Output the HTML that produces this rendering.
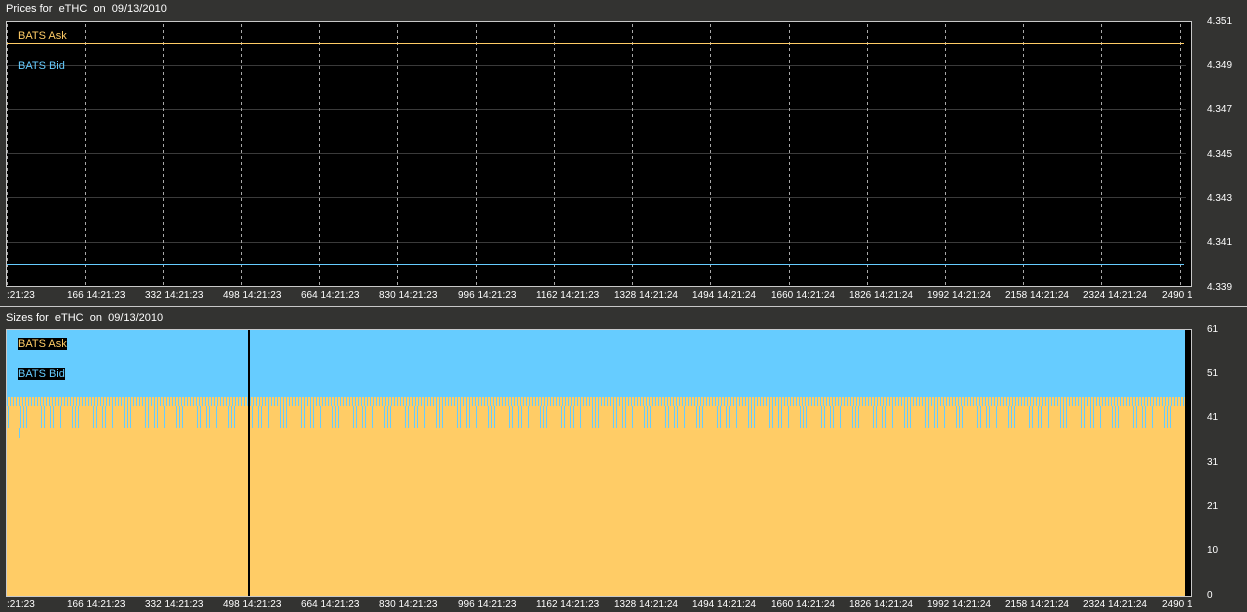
<!DOCTYPE html>
<html><head><style>
body{margin:0;width:1247px;height:612px;background:#333331;overflow:hidden;position:relative;font-family:"Liberation Sans",sans-serif;font-size:10px;color:#fff}
.t{position:absolute;white-space:nowrap;line-height:12px}
svg{position:absolute;left:0;top:0}
</style></head><body>
<svg width="1247" height="612">
<defs>
<pattern id="dash" width="1" height="6" patternUnits="userSpaceOnUse"><rect width="1" height="3" fill="#a8a8a8"/></pattern>
<pattern id="st" x="7" width="3" height="10" patternUnits="userSpaceOnUse"><rect width="1" height="10" fill="#66ccff"/></pattern>
<pattern id="lg" x="7" width="52" height="30" patternUnits="userSpaceOnUse">
<rect x="1" width="1" height="30" fill="#66ccff"/><rect x="13" width="1" height="30" fill="#66ccff"/><rect x="16" width="1" height="30" fill="#66ccff"/><rect x="19" width="1" height="30" fill="#66ccff"/><rect x="34" width="1" height="30" fill="#66ccff"/><rect x="37" width="1" height="30" fill="#66ccff"/><rect x="43" width="1" height="30" fill="#66ccff"/><rect x="46" width="1" height="30" fill="#66ccff"/></pattern>
</defs>
<rect x="6" y="21" width="1186" height="265" fill="#000"/>
<g stroke="#3a3a3a" stroke-width="1">
<line x1="7" y1="65.5" x2="1186" y2="65.5"/><line x1="7" y1="109.5" x2="1186" y2="109.5"/><line x1="7" y1="153.5" x2="1186" y2="153.5"/><line x1="7" y1="197.5" x2="1186" y2="197.5"/><line x1="7" y1="242.5" x2="1186" y2="242.5"/>
</g>
<g fill="url(#dash)">
<rect x="7" y="22" width="1" height="264"/><rect x="85" y="22" width="1" height="264"/><rect x="163" y="22" width="1" height="264"/><rect x="241" y="22" width="1" height="264"/><rect x="319" y="22" width="1" height="264"/><rect x="397" y="22" width="1" height="264"/><rect x="476" y="22" width="1" height="264"/><rect x="554" y="22" width="1" height="264"/><rect x="632" y="22" width="1" height="264"/><rect x="710" y="22" width="1" height="264"/><rect x="789" y="22" width="1" height="264"/><rect x="867" y="22" width="1" height="264"/><rect x="945" y="22" width="1" height="264"/><rect x="1023" y="22" width="1" height="264"/><rect x="1101" y="22" width="1" height="264"/><rect x="1180" y="22" width="1" height="264"/>
</g>
<line x1="7" y1="43.5" x2="1184" y2="43.5" stroke="#ffcc66"/>
<line x1="7" y1="264.5" x2="1184" y2="264.5" stroke="#66ccff"/>
<rect x="6.5" y="21.5" width="1185" height="265" fill="none" stroke="#c8c8c8"/>
<line x1="0" y1="306.5" x2="1247" y2="306.5" stroke="#c8c8c8"/>
<rect x="6" y="329" width="1186" height="267" fill="#66ccff"/>
<rect x="7" y="397" width="1178" height="199" fill="#ffcc66"/>
<rect x="7" y="397" width="1178" height="9" fill="url(#st)"/>
<rect x="7" y="406" width="1178" height="22" fill="url(#lg)"/>
<rect x="19" y="428" width="1" height="10" fill="#66ccff"/>
<rect x="248" y="329" width="2" height="267" fill="#000"/>
<rect x="1185" y="329" width="6" height="267" fill="#000"/>
<rect x="6.5" y="329.5" width="1185" height="267" fill="none" stroke="#c8c8c8"/>
</svg>
<div class="t" style="left:6px;top:3px;font-size:11px">Prices for &nbsp;eTHC &nbsp;on &nbsp;09/13/2010</div>
<div class="t" style="left:6px;top:312px;font-size:11px">Sizes for &nbsp;eTHC &nbsp;on &nbsp;09/13/2010</div>
<div class="t" style="left:18px;top:30px;color:#ffcc66;font-size:11px">BATS Ask</div>
<div class="t" style="left:18px;top:60px;color:#66ccff;font-size:11px">BATS Bid</div>
<div class="t" style="left:18px;top:338px;color:#ffcc66;background:#000;font-size:11px">BATS Ask</div>
<div class="t" style="left:18px;top:368px;color:#66ccff;background:#000;font-size:11px">BATS Bid</div>
<div class="t" style="left:1207px;top:16px">4.351</div>
<div class="t" style="left:1207px;top:60px">4.349</div>
<div class="t" style="left:1207px;top:104px">4.347</div>
<div class="t" style="left:1207px;top:149px">4.345</div>
<div class="t" style="left:1207px;top:193px">4.343</div>
<div class="t" style="left:1207px;top:237px">4.341</div>
<div class="t" style="left:1207px;top:282px">4.339</div>
<div class="t" style="left:1207px;top:324px">61</div>
<div class="t" style="left:1207px;top:368px">51</div>
<div class="t" style="left:1207px;top:412px">41</div>
<div class="t" style="left:1207px;top:457px">31</div>
<div class="t" style="left:1207px;top:501px">21</div>
<div class="t" style="left:1207px;top:545px">10</div>
<div class="t" style="left:1207px;top:590px">0</div>
<div style="position:absolute;left:0;top:290px;width:1192px;height:14px;overflow:hidden">
<div class="t" style="left:7px;top:0">:21:23</div>
<div class="t" style="left:67px;top:0">166 14:21:23</div>
<div class="t" style="left:145px;top:0">332 14:21:23</div>
<div class="t" style="left:223px;top:0">498 14:21:23</div>
<div class="t" style="left:301px;top:0">664 14:21:23</div>
<div class="t" style="left:379px;top:0">830 14:21:23</div>
<div class="t" style="left:458px;top:0">996 14:21:23</div>
<div class="t" style="left:536px;top:0">1162 14:21:23</div>
<div class="t" style="left:614px;top:0">1328 14:21:24</div>
<div class="t" style="left:692px;top:0">1494 14:21:24</div>
<div class="t" style="left:771px;top:0">1660 14:21:24</div>
<div class="t" style="left:849px;top:0">1826 14:21:24</div>
<div class="t" style="left:927px;top:0">1992 14:21:24</div>
<div class="t" style="left:1005px;top:0">2158 14:21:24</div>
<div class="t" style="left:1083px;top:0">2324 14:21:24</div>
<div class="t" style="left:1162px;top:0">2490 14:21:24</div>
</div>
<div style="position:absolute;left:0;top:599px;width:1192px;height:13px;overflow:hidden">
<div class="t" style="left:7px;top:0">:21:23</div>
<div class="t" style="left:67px;top:0">166 14:21:23</div>
<div class="t" style="left:145px;top:0">332 14:21:23</div>
<div class="t" style="left:223px;top:0">498 14:21:23</div>
<div class="t" style="left:301px;top:0">664 14:21:23</div>
<div class="t" style="left:379px;top:0">830 14:21:23</div>
<div class="t" style="left:458px;top:0">996 14:21:23</div>
<div class="t" style="left:536px;top:0">1162 14:21:23</div>
<div class="t" style="left:614px;top:0">1328 14:21:24</div>
<div class="t" style="left:692px;top:0">1494 14:21:24</div>
<div class="t" style="left:771px;top:0">1660 14:21:24</div>
<div class="t" style="left:849px;top:0">1826 14:21:24</div>
<div class="t" style="left:927px;top:0">1992 14:21:24</div>
<div class="t" style="left:1005px;top:0">2158 14:21:24</div>
<div class="t" style="left:1083px;top:0">2324 14:21:24</div>
<div class="t" style="left:1162px;top:0">2490 14:21:24</div>
</div>
</body></html>
